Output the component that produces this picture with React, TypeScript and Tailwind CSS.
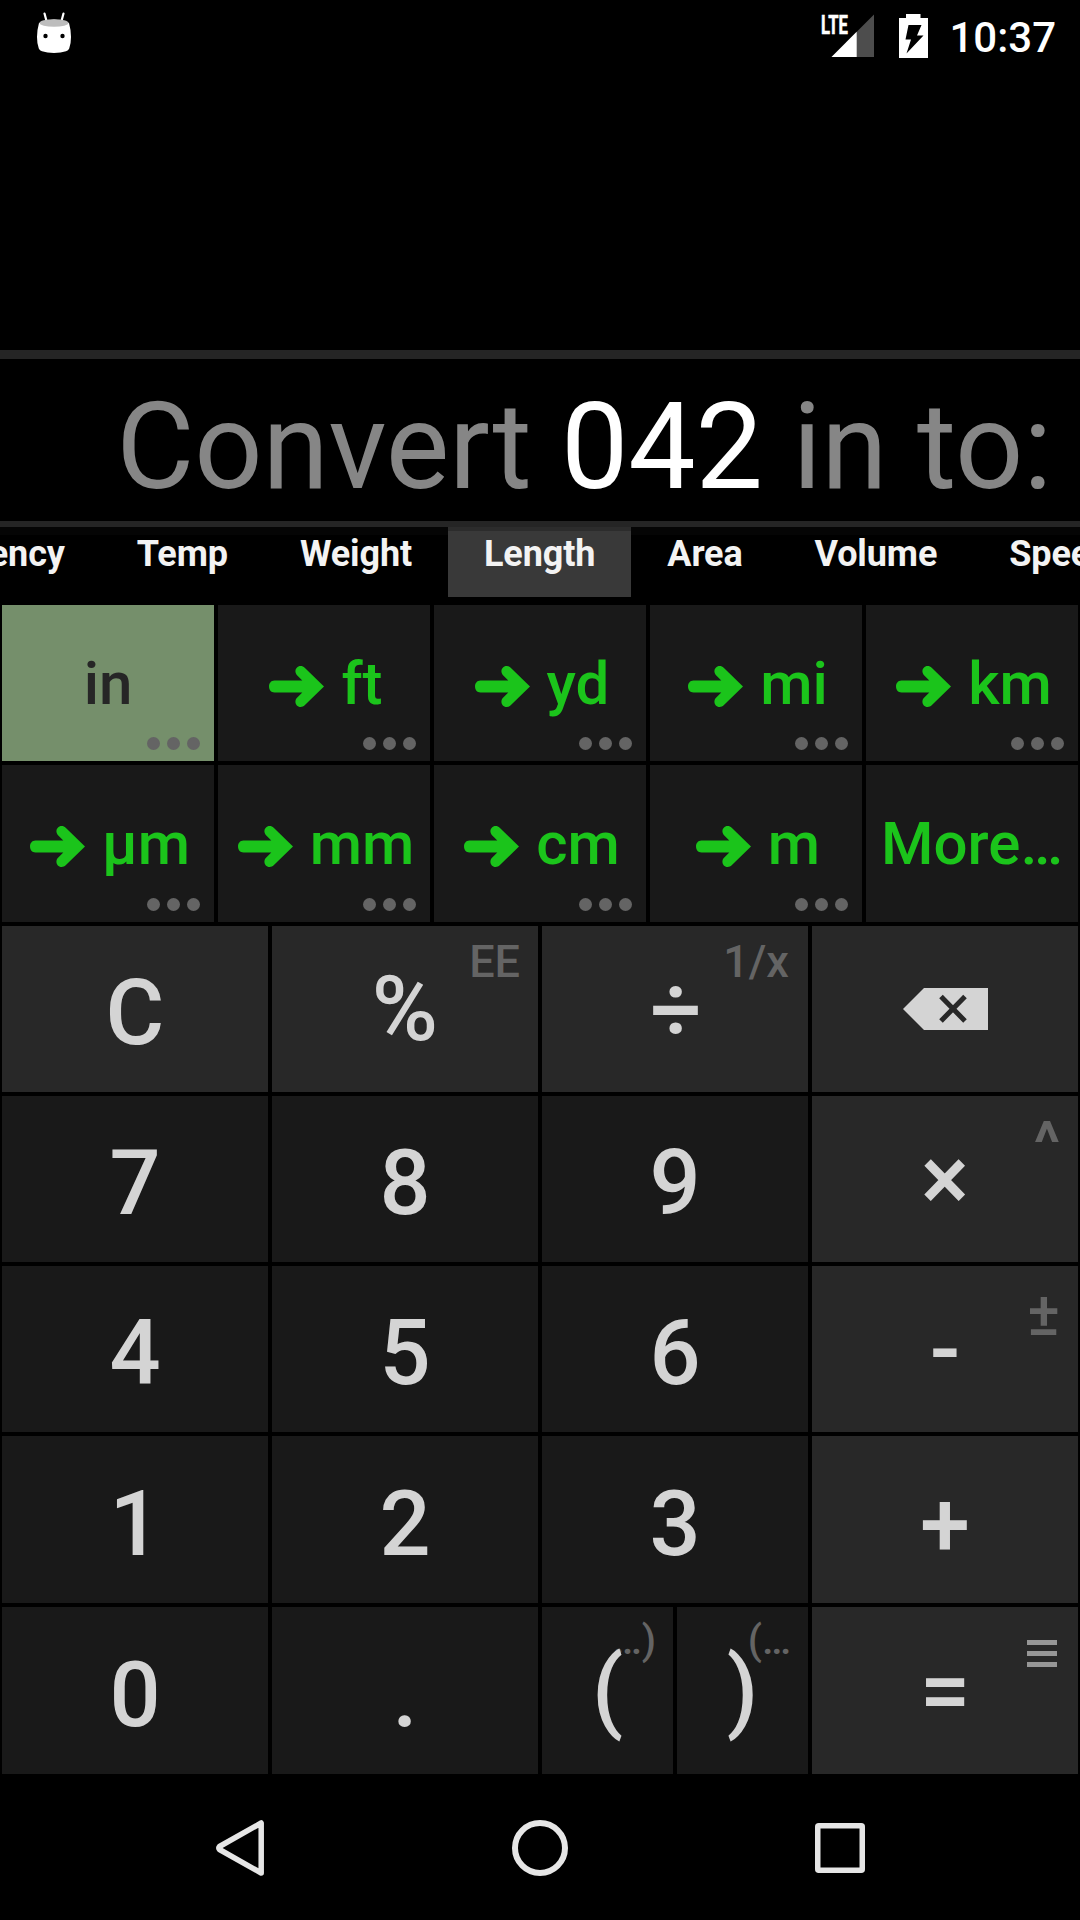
import React from "react";

type KeyDef = {
  label: React.ReactNode;
  op?: boolean;
  shift?: string;
  hint?: React.ReactNode;
};

const tabs = ["Currency", "Temp", "Weight", "Length", "Area", "Volume", "Speed"];
const unitRows = [
  ["in", "ft", "yd", "mi", "km"],
  ["µm", "mm", "cm", "m", "More…"],
];

function Marshmallow() {
  return (
    <svg width="36" height="42" viewBox="0 0 36 42" className="mt-3 ml-9">
      <path d="M8.5 1.5 L10.5 9 M27.5 1.5 L25.5 9" stroke="#fff" strokeWidth="2.2" strokeLinecap="round" />
      <path d="M3 11 Q18 4 33 11 Q35 18 35 25 Q35 32 33.2 36.5 Q32.4 38.6 30 39.2 Q25 41 18 41 Q11 41 6 39.2 Q3.6 38.6 2.8 36.5 Q1 32 1 25 Q1 18 3 11Z" fill="#fff" />
      <ellipse cx="18" cy="11" rx="14.5" ry="3.8" fill="#bdbdbd" />
      <circle cx="9.5" cy="24" r="2.2" fill="#000" />
      <circle cx="26.5" cy="24" r="2.2" fill="#000" />
    </svg>
  );
}

function StatusBar() {
  return (
    <header className="flex h-[72px] justify-between">
      <Marshmallow />
      <div className="flex pr-6">
        <div className="relative h-[72px] w-[54px]">
          <svg width="54" height="72" viewBox="0 0 54 72">
            <path d="M54 14.5V57H11.5Z" fill="#4d4d4d" />
            <path d="M36.7 31.8V57H11.5Z" fill="#fff" />
          </svg>
          <span className="absolute top-3 left-px origin-left scale-x-[0.64] text-[26px] leading-[26px] font-bold [-webkit-text-stroke:0.6px_white]">
            LTE
          </span>
        </div>
        <svg width="29" height="44" viewBox="0 0 29 44" className="mt-[14px] ml-[25px]">
          <path d="M7 0H21.5V4H29V44H0V4H7Z" fill="#fff" />
          <path d="M9.5 11H22.5L18 21.5H24.5L7.5 39.5L12 25.5H6.5Z" fill="#000" />
        </svg>
        <span className="mt-[13px] ml-[21px] text-[42px] leading-[50px] font-medium">10:37</span>
      </div>
    </header>
  );
}

function Arrow() {
  return (
    <svg width="55" height="41" viewBox="0 0 55 41" className="mt-[5px] mr-[17px] ml-1 shrink-0">
      <path
        d="M5.5 14.5H33.3L27.8 8.9C24.8 5.5 27 0 31.6 0C33.3 0 34.6 .6 35.7 1.7L55 20.5L35.7 39.3C34.6 40.4 33.3 41 31.6 41C27 41 24.8 35.5 27.8 32.1L33.3 26.5H5.5C-1.8 26.5-1.8 14.5 5.5 14.5Z"
        fill="#1bc41b"
      />
    </svg>
  );
}

function Dots() {
  return (
    <span className="absolute right-[14px] bottom-[11px] flex gap-[7px]">
      <i className="size-[13px] rounded-full bg-[#646464]" />
      <i className="size-[13px] rounded-full bg-[#646464]" />
      <i className="size-[13px] rounded-full bg-[#646464]" />
    </span>
  );
}

function UnitKey({ name }: { name: string }) {
  const selected = name === "in";
  const more = name === "More…";
  return (
    <button
      className={`relative m-0.5 flex items-center justify-center pt-px text-[60px] leading-[70px] font-medium ${
        selected ? "bg-[#758f6b] text-[#262626]" : "bg-[#191919] text-[#1bc41b]"
      }`}
    >
      {!selected && !more && <Arrow />}
      <span>{name}</span>
      {!more && <Dots />}
    </button>
  );
}

function Backspace() {
  return (
    <svg width="85" height="42" viewBox="0 0 85 42">
      <path d="M0 21L21 0H85V42H21Z" fill="#d4d4d4" />
      <path d="M38 8.5L62 33M62 8.5L38 33" stroke="#282828" strokeWidth="5" />
    </svg>
  );
}

const hintText = "absolute top-[13px] right-[18px] text-[45px] leading-[45px] font-medium text-[#646464]";
const fractionHint = "absolute top-[13px] right-[19px] text-[45px] leading-[45px] font-medium text-[#646464]";
const caretHint = "absolute top-[17px] right-[18px] text-[60px] leading-[60px] font-bold text-[#646464]";
const signHint = "absolute top-[18px] right-[18px] text-[61px] leading-[60px] font-medium text-[#646464]";
const parenHint = "absolute top-[11px] right-[17px] text-[41px] leading-[45px] text-[#646464]";

const menuIcon = (
  <span className="absolute top-[33px] right-[21px] flex w-[30px] flex-col gap-[6px]">
    <i className="h-[5px] bg-[#969696]" />
    <i className="h-[5px] bg-[#969696]" />
    <i className="h-[5px] bg-[#969696]" />
  </span>
);

const keyRows: KeyDef[][] = [
  [
    { label: "C", op: true, shift: "pt-[10px]" },
    { label: "%", op: true, shift: "pt-[2px]", hint: <span className={hintText}>EE</span> },
    { label: "÷", op: true, shift: "pt-[4px] pl-[2px]", hint: <span className={fractionHint}>1/x</span> },
    { label: <Backspace />, op: true },
  ],
  [
    { label: "7", shift: "pt-[10px]" },
    { label: "8", shift: "pt-[10px]" },
    { label: "9", shift: "pt-[10px]" },
    { label: "×", op: true, shift: "pt-[2px]", hint: <span className={caretHint}>^</span> },
  ],
  [
    { label: "4", shift: "pt-[10px]" },
    { label: "5", shift: "pt-[10px]" },
    { label: "6", shift: "pt-[10px]" },
    { label: "-", op: true, shift: "pt-[2px]", hint: <span className={signHint}>±</span> },
  ],
  [
    { label: "1", shift: "pt-[11px]" },
    { label: "2", shift: "pt-[11px]" },
    { label: "3", shift: "pt-[11px]" },
    { label: "+", op: true, shift: "pt-[13px]" },
  ],
];

function Key({ label, op, shift = "", hint }: KeyDef) {
  return (
    <button
      className={`relative m-0.5 flex min-w-0 flex-1 items-center justify-center text-[90px] leading-[106px] font-medium text-[#d4d4d4] ${
        op ? "bg-[#282828]" : "bg-[#191919]"
      } ${shift}`}
    >
      {hint}
      <span className="relative">{label}</span>
    </button>
  );
}

function NavBar() {
  return (
    <nav className="flex h-[144px] items-center justify-between pr-[214px] pl-[215px]">
      <svg width="50" height="58" viewBox="0 0 50 58" fill="none" stroke="#e6e6e6" strokeWidth="5.5" strokeLinejoin="round">
        <path d="M46.2 4V54L4.5 30.5Q3 29 4.5 27.5Z" />
      </svg>
      <svg width="58" height="58" viewBox="0 0 58 58" fill="none" stroke="#e6e6e6" strokeWidth="6">
        <circle cx="29" cy="29" r="25" />
      </svg>
      <svg width="52" height="52" viewBox="0 0 52 52" fill="none" stroke="#e6e6e6" strokeWidth="5.5" strokeLinejoin="round">
        <rect x="3.75" y="3.75" width="44.5" height="44.5" rx="1" />
      </svg>
    </nav>
  );
}

export default function App() {
  return (
    <main className="flex h-[1920px] w-[1080px] flex-col overflow-hidden bg-black font-['Roboto',sans-serif] text-white">
      <StatusBar />
      <div className="h-[278px]" />
      <section className="flex h-[177px] items-center justify-end border-t-[9px] border-b-[6px] border-[#252525] pt-[14px] pr-[28px] text-[120px] leading-[140px] tracking-[-0.2px] whitespace-pre text-[#868686]">
        <span>Convert </span>
        <span className="text-white">042</span>
        <span> in to:</span>
      </section>
      <div className="h-[76px] overflow-hidden">
        <div className="-ml-[116.5px] flex h-[70px]">
          {tabs.map((tab) => (
            <button
              key={tab}
              className={`flex shrink-0 px-9 text-[36px] leading-[42px] font-bold tracking-[-0.12px] text-[#f3f3f3] ${
                tab === "Length" ? "border-t-4 border-[#2c2c2c] bg-[#393939] pt-[2px]" : "border-t-8 border-[#050505]"
              }`}
            >
              <span className={tab === "Length" ? "" : "-mt-[2px]"}>{tab}</span>
            </button>
          ))}
        </div>
      </div>
      <div className="grid h-[321px] grid-cols-5 grid-rows-[160px_161px]">
        {unitRows.flat().map((name) => (
          <UnitKey key={name} name={name} />
        ))}
      </div>
      <div className="grid h-[852px] grid-rows-[170px_170px_170px_171px_171px]">
        {keyRows.map((row, i) => (
          <div key={i} className="grid grid-cols-4">
            {row.map((k, j) => (
              <Key key={j} {...k} />
            ))}
          </div>
        ))}
        <div className="grid grid-cols-4">
          <Key label="0" shift="pt-[11px]" />
          <Key label="." shift="pt-[11px]" />
          <div className="flex">
            <Key label="(" shift="pt-[1px]" hint={<span className={parenHint}>…)</span>} />
            <Key label=")" shift="pt-[1px]" hint={<span className={parenHint}>(…</span>} />
          </div>
          <Key label="=" op shift="pt-[2px]" hint={menuIcon} />
        </div>
      </div>
      <NavBar />
    </main>
  );
}
